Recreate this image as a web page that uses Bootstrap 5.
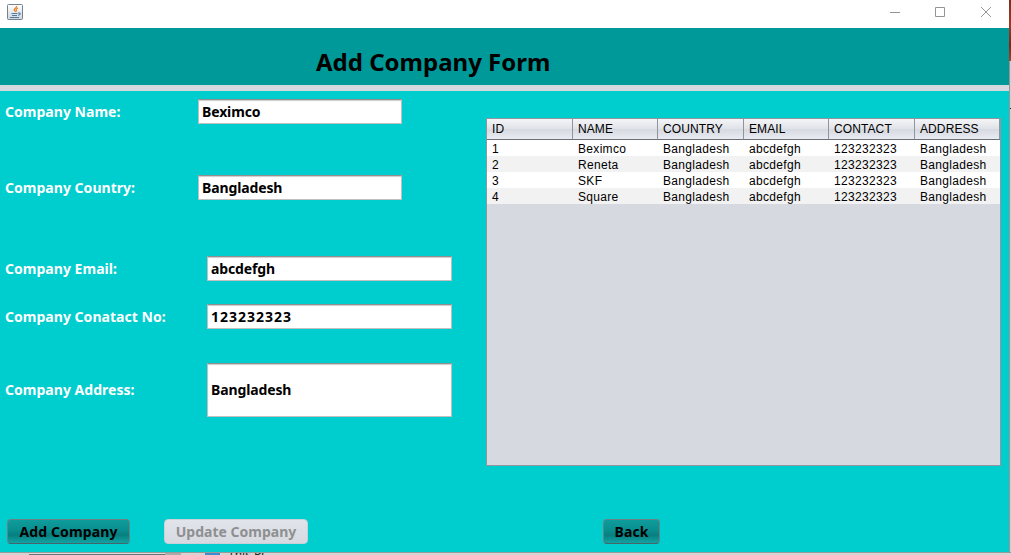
<!DOCTYPE html>
<html lang="en">
<head>
<meta charset="utf-8">
<title>Add Company Form</title>
<link rel="stylesheet" href="https://cdn.jsdelivr.net/npm/bootstrap@5.3.0/dist/css/bootstrap.min.css">
<style>
  body { width: 1011px; height: 555px; background: #c9c9c9; font-family: "Noto Sans", "Open Sans", sans-serif; font-size: 14px; font-weight: 700; line-height: 20px; }
  .app-window { width: 1009px; height: 552px; background: #00cdcd; }
  .title-bar { height: 28px; padding-left: 7px; }
  .title-bar svg { display: block; }
  .heading-panel { height: 57px; background: #009999; padding-left: 316px; }
  .heading-panel h1 { font-size: 24px; line-height: 30px; font-weight: 700; margin: 19px 0 0; color: #000; }
  .divider { height: 6px; background: #d6d9e0; }
  .workspace { height: 428px; }
  .entry-form { width: 486px; padding: 8px 0 0 5px; }
  .entry-form label { color: #fff; width: 202px; padding-top: 1px; letter-spacing: .03px; }
  .field-row.upper label { width: 193px; }
  .field-row.upper .form-control { width: 204px; }
  .form-control { width: 245px; height: 25px; border: 1px solid #c0c0c0; border-top-color: #8f8f8f; border-radius: 0; padding: 0 3px 1px; font: inherit; letter-spacing: -.12px; color: #000; box-shadow: inset 0 1px 1px #ccc; }
  .form-control.digits { letter-spacing: 1px; }
  .form-control.tall { height: 54px; }
  .table-panel { width: 515px; height: 348px; margin-top: 27px; background: #d6d9e0; border: 1px solid #8f979e; }
  .data-grid { width: 513px; table-layout: fixed; font: 12px/15px "Liberation Sans", Arial, sans-serif; color: #000; border-collapse: separate; border-spacing: 0; }
  .data-grid th { height: 21px; font-weight: 400; padding: 1px 0 0 5px; letter-spacing: .1px; background: linear-gradient(#f4f5f8, #dfe2e7 50%, #d6d9df 51%, #e8ebf1); border-right: 1px solid #8f959e; border-bottom: 1px solid #6b7078; }
  .data-grid td { height: 16px; line-height: 14px; padding: 2px 0 0 5px; letter-spacing: .32px; background: #fff; }
  .data-grid tr:nth-child(even) td { background: #f2f2f2; }
  .actions { height: 33px; padding-left: 7px; }
  .btn { height: 25px; padding: 0; font: inherit; line-height: 23px; border-radius: 4px; color: #000; }
  .btn-teal, .btn-teal:hover { color: #000; letter-spacing: .12px; border: 1px solid #6b8084; border-bottom-color: #45656a; background: linear-gradient(#0f9c9c, #098e8e 45%, #067f7f 65%, #12a3a3); }
  .btn-off, .btn-off:disabled { color: #8e8f91; opacity: 1; border: 1px solid #c9d0d8; background: linear-gradient(#e1e4e9, #d6d9e0); }
  .side-edge { width: 2px; height: 552px; background: linear-gradient(90deg, #969696 50%, #cfcfcf 50%); }
  .side-edge i { display: block; height: 61px; background: linear-gradient(#7d2d1b, #a33a20 40%, #7d2612 75%, #a84227); }
  .side-edge b { display: block; height: 1px; width: 1px; margin: 47px 0 0 1px; background: #222; }
  .behind { height: 3px; border-top: 1px solid #999; background: #d4d4d4; font: 12px/14px "Noto Sans", sans-serif; color: #222; }
  .behind .field-edge { width: 136px; height: 2px; margin-left: 29px; background: linear-gradient(#ddd 50%, #63757b 50%); }
  .behind .gap { width: 16px; height: 2px; background: #ababab; }
  .behind .thumb { width: 15px; height: 2px; margin-left: 24px; background: #3e8bd0; }
  .behind .caption-text { margin: -5px 0 0 8px; white-space: nowrap; }
</style>
<script src="https://cdn.jsdelivr.net/npm/bootstrap@5.3.0/dist/js/bootstrap.bundle.min.js"></script>
</head>
<body class="overflow-hidden">
<div class="d-flex">
  <main class="app-window d-flex flex-column">
    <header class="title-bar bg-white d-flex justify-content-between">
      <svg width="16" height="28" viewBox="0 0 16 28">
        <defs><linearGradient id="tile" x2="0" y2="1"><stop stop-color="#fff"/><stop offset="1" stop-color="#ccd6df"/></linearGradient></defs>
        <rect x=".5" y="4.500" width="15" height="15" rx="1" fill="url(#tile)" stroke="#75818c"/>
        <path d="M9.500 6c1 2-3.500 2.800-2 4.500.5.600 1 .8.700 1.500M11 8c-2.500 1-2 2-1.300 3.500" fill="none" stroke="#e98224" stroke-width="1.300"/>
        <path d="M4.500 13.500h6M5 15.500h5M3 17.500h9M11 13c3-.5 3 2 0 2.300" fill="none" stroke="#55799c" stroke-width="1.100"/>
      </svg>
      <svg width="138" height="28" viewBox="0 0 138 28" fill="none" stroke="#949494">
        <path d="M19 12.500h10M64.500 7.500h9v9h-9zM110 7l10 10M120 7l-10 10"/>
      </svg>
    </header>
    <section class="heading-panel"><h1 class="d-inline-block">Add Company Form</h1></section>
    <div class="divider"></div>
    <div class="workspace d-flex">
      <form class="entry-form d-flex flex-column">
        <div class="field-row upper d-flex align-items-center" style="margin-bottom:51px"><label for="name">Company Name:</label><input class="form-control" id="name" value="Beximco"></div>
        <div class="field-row upper d-flex align-items-center" style="margin-bottom:56px"><label for="country">Company Country:</label><input class="form-control" id="country" value="Bangladesh"></div>
        <div class="field-row d-flex align-items-center" style="margin-bottom:23px"><label for="email">Company Email:</label><input class="form-control" id="email" value="abcdefgh"></div>
        <div class="field-row d-flex align-items-center" style="margin-bottom:34px"><label for="contact">Company Conatact No:</label><input class="form-control digits" id="contact" value="123232323"></div>
        <div class="field-row d-flex align-items-center"><label for="address" class="pt-0">Company Address:</label><input class="form-control tall" id="address" value="Bangladesh"></div>
      </form>
      <section class="table-panel">
        <table class="data-grid">
          <colgroup><col style="width:86px"><col style="width:85px"><col style="width:86px"><col style="width:85px"><col style="width:86px"><col style="width:85px"></colgroup>
          <thead><tr><th>ID</th><th>NAME</th><th>COUNTRY</th><th>EMAIL</th><th>CONTACT</th><th>ADDRESS</th></tr></thead>
          <tbody>
            <tr><td>1</td><td>Beximco</td><td>Bangladesh</td><td>abcdefgh</td><td>123232323</td><td>Bangladesh</td></tr>
            <tr><td>2</td><td>Reneta</td><td>Bangladesh</td><td>abcdefgh</td><td>123232323</td><td>Bangladesh</td></tr>
            <tr><td>3</td><td>SKF</td><td>Bangladesh</td><td>abcdefgh</td><td>123232323</td><td>Bangladesh</td></tr>
            <tr><td>4</td><td>Square</td><td>Bangladesh</td><td>abcdefgh</td><td>123232323</td><td>Bangladesh</td></tr>
          </tbody>
        </table>
      </section>
    </div>
    <footer class="actions d-flex">
      <button class="btn btn-teal" style="width:123px">Add Company</button>
      <button class="btn btn-off" style="width:144px;margin-left:34px" disabled>Update Company</button>
      <button class="btn btn-teal" style="width:57px;margin-left:295px">Back</button>
    </footer>
  </main>
  <div class="side-edge"><i></i><b></b></div>
</div>
<div class="behind d-flex overflow-hidden"><div class="field-edge"></div><div class="gap"></div><div class="thumb"></div><span class="caption-text">This PC</span></div>
</body>
</html>
